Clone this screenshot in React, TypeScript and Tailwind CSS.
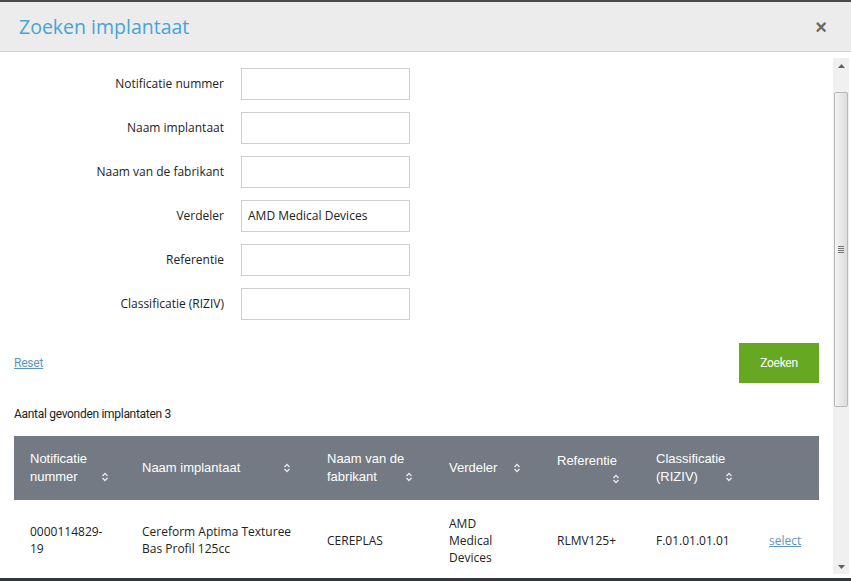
import React from 'react';

const FIELDS: { label: string; value?: string }[] = [
  { label: 'Notificatie nummer' },
  { label: 'Naam implantaat' },
  { label: 'Naam van de fabrikant' },
  { label: 'Verdeler', value: 'AMD Medical Devices' },
  { label: 'Referentie' },
  { label: 'Classificatie (RIZIV)' },
];

const SortIcon = () => (
  <svg width="8" height="10" viewBox="0 0 8 10" className="shrink-0">
    <path d="M1.5 4 L4 1.5 L6.5 4" fill="none" stroke="#e6e8ea" strokeWidth="1.4" />
    <path d="M1.5 6 L4 8.5 L6.5 6" fill="none" stroke="#e6e8ea" strokeWidth="1.4" />
  </svg>
);

export default function App() {
  return (
    <div className="w-[851px] h-[581px] overflow-hidden bg-white flex flex-col font-['Open_Sans',sans-serif] text-[#222]">
      {/* title bar */}
      <div className="h-[52px] shrink-0 bg-[#ececec] border-t-2 border-t-[#4a4a4a] border-b border-b-[#d2d2d2] flex items-center justify-between pl-[19px] pr-[24px]">
        <h1 className="text-[19.5px] text-[#49a3d8] font-['Open_Sans',sans-serif]">Zoeken implantaat</h1>
        <span className="text-[20px] font-bold text-[#6a6a6a] font-['Liberation_Sans',sans-serif] leading-none">×</span>
      </div>

      {/* body */}
      <div className="flex-1 flex min-h-0 border-b-[3px] border-b-[#2e3640]">
        <div className="flex-1 pl-[14px] pr-[14px] pt-[16px] overflow-hidden">
          <div className="flex flex-col gap-[12px]">
            {FIELDS.map((f) => (
              <div key={f.label} className="flex items-center">
                <label className="w-[227px] text-right text-[12px] pr-[17px]">{f.label}</label>
                <div className="w-[169px] h-[32px] border border-[#cfcfcf] px-[6px] flex items-center text-[12px]">
                  {f.value}
                </div>
              </div>
            ))}
          </div>

          <div className="flex items-center justify-between mt-[23px]">
            <a className="text-[12px] text-[#5e97bd] underline font-['Roboto',sans-serif] tracking-[-0.2px]">Reset</a>
            <button className="w-[80px] h-[40px] bg-[#67a823] text-white text-[12px] font-['Roboto',sans-serif] tracking-[-0.3px]">
              Zoeken
            </button>
          </div>

          <div className="mt-[22px] text-[12px] font-['Roboto',sans-serif] tracking-[-0.3px]">Aantal gevonden implantaten 3</div>

          <table className="mt-[13px] w-[805px] border-collapse table-fixed">
            <colgroup>
              <col className="w-[112px]" />
              <col className="w-[185px]" />
              <col className="w-[122px]" />
              <col className="w-[108px]" />
              <col className="w-[99px]" />
              <col className="w-[113px]" />
              <col className="w-[66px]" />
            </colgroup>
            <thead>
              <tr className="bg-[#737a83] text-white h-[64px] text-[13px] font-['Liberation_Sans',sans-serif] leading-[18px]">
                <th className="font-normal text-left pl-[16px] pr-[17px]">
                  <div className="flex items-end justify-between"><span>Notificatie<br />nummer</span><span className="pb-[4px]"><SortIcon /></span></div>
                </th>
                <th className="font-normal text-left pl-[16px] pr-[20px]">
                  <div className="flex items-center justify-between"><span>Naam implantaat</span><SortIcon /></div>
                </th>
                <th className="font-normal text-left pl-[16px] pr-[20px]">
                  <div className="flex items-end justify-between"><span>Naam van de<br />fabrikant</span><span className="pb-[4px]"><SortIcon /></span></div>
                </th>
                <th className="font-normal text-left pl-[16px] pr-[20px]">
                  <div className="flex items-center justify-between"><span>Verdeler</span><SortIcon /></div>
                </th>
                <th className="font-normal text-left pl-[16px] pr-[20px]">
                  <div className="flex flex-col"><span>Referentie</span><span className="flex justify-end pt-[4px]"><SortIcon /></span></div>
                </th>
                <th className="font-normal text-left pl-[16px] pr-[21px]">
                  <div className="flex items-end justify-between"><span>Classificatie<br />(RIZIV)</span><span className="pb-[4px]"><SortIcon /></span></div>
                </th>
                <th />
              </tr>
            </thead>
            <tbody>
              <tr className="h-[80px] text-[12px] leading-[17px]">
                <td className="pl-[16px]">0000114829-<br />19</td>
                <td className="pl-[16px]">Cereform Aptima Texturee<br />Bas Profil 125cc</td>
                <td className="pl-[16px]">CEREPLAS</td>
                <td className="pl-[16px]">AMD<br />Medical<br />Devices</td>
                <td className="pl-[16px]">RLMV125+</td>
                <td className="pl-[16px]">F.01.01.01.01</td>
                <td className="pl-[16px]"><a className="text-[#5e97bd] underline">select</a></td>
              </tr>
            </tbody>
          </table>
        </div>

        {/* scrollbar */}
        <div className="w-[18px] shrink-0 flex flex-col pt-[6px] pb-[4px] pr-[2px] bg-white">
          <div className="flex-1 bg-[#f0f0f0] flex flex-col items-center">
            <div className="h-[34px] w-full flex items-start justify-center pt-[6px]">
              <svg width="7" height="4" viewBox="0 0 7 4"><path d="M0 4 L3.5 0 L7 4 Z" fill="#606060" /></svg>
            </div>
            <div className="w-[14px] h-[315px] bg-gradient-to-r from-[#f4f4f4] to-[#dcdcdc] border border-[#b8b8b8] rounded-[2px] flex items-center justify-center">
              <div className="flex flex-col gap-[1px]">
                <div className="w-[6px] h-[1px] bg-[#777]" />
                <div className="w-[6px] h-[1px] bg-[#777]" />
                <div className="w-[6px] h-[1px] bg-[#777]" />
                <div className="w-[6px] h-[1px] bg-[#777]" />
              </div>
            </div>
            <div className="flex-1" />
            <div className="h-[14px] w-full flex items-center justify-center">
              <svg width="7" height="4" viewBox="0 0 7 4"><path d="M0 0 L3.5 4 L7 0 Z" fill="#606060" /></svg>
            </div>
          </div>
        </div>
      </div>
    </div>
  );
}
